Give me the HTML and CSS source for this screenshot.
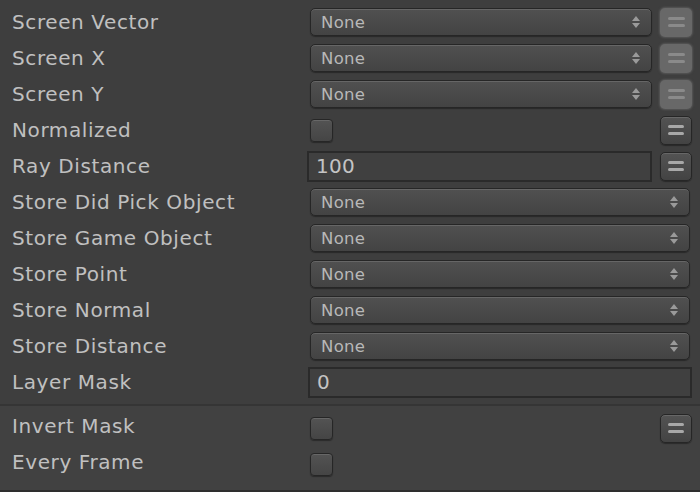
FILE: index.html
```html
<!DOCTYPE html>
<html>
<head>
<meta charset="utf-8">
<link rel="stylesheet" href="styles.css">
</head>
<body>
<div class="panel">
  <div class="section">
    <div class="row"><div class="label">Screen Vector</div><div class="ctrl"><div class="dropdown"><span>None</span><svg class="arrows" width="8" height="12" viewBox="0 0 8 12"><path d="M4 0 L8 5 L0 5 Z M0 7 L8 7 L4 12 Z" fill="#9a9a9a"/></svg></div><div class="vbtn light"><i></i><i></i></div></div></div>
    <div class="row"><div class="label">Screen X</div><div class="ctrl"><div class="dropdown"><span>None</span><svg class="arrows" width="8" height="12" viewBox="0 0 8 12"><path d="M4 0 L8 5 L0 5 Z M0 7 L8 7 L4 12 Z" fill="#9a9a9a"/></svg></div><div class="vbtn light"><i></i><i></i></div></div></div>
    <div class="row"><div class="label">Screen Y</div><div class="ctrl"><div class="dropdown"><span>None</span><svg class="arrows" width="8" height="12" viewBox="0 0 8 12"><path d="M4 0 L8 5 L0 5 Z M0 7 L8 7 L4 12 Z" fill="#9a9a9a"/></svg></div><div class="vbtn light"><i></i><i></i></div></div></div>
    <div class="row"><div class="label">Normalized</div><div class="ctrl"><div class="check"></div><div class="spacer"></div><div class="vbtn dark"><i></i><i></i></div></div></div>
    <div class="row"><div class="label">Ray Distance</div><div class="ctrl"><div class="field">100</div><div class="vbtn dark"><i></i><i></i></div></div></div>
    <div class="row"><div class="label">Store Did Pick Object</div><div class="ctrl"><div class="dropdown full"><span>None</span><svg class="arrows" width="8" height="12" viewBox="0 0 8 12"><path d="M4 0 L8 5 L0 5 Z M0 7 L8 7 L4 12 Z" fill="#9a9a9a"/></svg></div></div></div>
    <div class="row"><div class="label">Store Game Object</div><div class="ctrl"><div class="dropdown full"><span>None</span><svg class="arrows" width="8" height="12" viewBox="0 0 8 12"><path d="M4 0 L8 5 L0 5 Z M0 7 L8 7 L4 12 Z" fill="#9a9a9a"/></svg></div></div></div>
    <div class="row"><div class="label">Store Point</div><div class="ctrl"><div class="dropdown full"><span>None</span><svg class="arrows" width="8" height="12" viewBox="0 0 8 12"><path d="M4 0 L8 5 L0 5 Z M0 7 L8 7 L4 12 Z" fill="#9a9a9a"/></svg></div></div></div>
    <div class="row"><div class="label">Store Normal</div><div class="ctrl"><div class="dropdown full"><span>None</span><svg class="arrows" width="8" height="12" viewBox="0 0 8 12"><path d="M4 0 L8 5 L0 5 Z M0 7 L8 7 L4 12 Z" fill="#9a9a9a"/></svg></div></div></div>
    <div class="row"><div class="label">Store Distance</div><div class="ctrl"><div class="dropdown full"><span>None</span><svg class="arrows" width="8" height="12" viewBox="0 0 8 12"><path d="M4 0 L8 5 L0 5 Z M0 7 L8 7 L4 12 Z" fill="#9a9a9a"/></svg></div></div></div>
    <div class="row"><div class="label">Layer Mask</div><div class="ctrl"><div class="field full">0</div></div></div>
  </div>
  <div class="section lower">
    <div class="row"><div class="label">Invert Mask</div><div class="ctrl"><div class="check"></div><div class="spacer"></div><div class="vbtn dark"><i></i><i></i></div></div></div>
    <div class="row"><div class="label">Every Frame</div><div class="ctrl"><div class="check"></div></div></div>
  </div>
</div>
</body>
</html>
```
FILE: styles.css
```css
html, body {
  margin: 0;
  padding: 0;
  background: #3e3e3e;
}
.panel {
  width: 700px;
  height: 492px;
  display: flex;
  flex-direction: column;
  background: #3e3e3e;
  font-family: "DejaVu Sans", "Liberation Sans", sans-serif;
  color: #c0c0c0;
  overflow: hidden;
}
.section {
  display: flex;
  flex-direction: column;
  padding-top: 4px;
}
.lower {
  border-top: 2px solid #353535;
  margin-top: 4px;
  padding-top: 4px;
  background: #414141;
  flex: 1;
  border-bottom: 2px solid #2e2e2e;
}
.row {
  height: 36px;
  display: flex;
  align-items: center;
}
.label {
  width: 296px;
  padding-left: 12px;
  font-size: 20px;
  letter-spacing: 0.6px;
  white-space: nowrap;
  position: relative;
  top: 0;
}
.lower .label { margin-top: -4px; }
.ctrl {
  flex: 1;
  display: flex;
  align-items: center;
  padding-right: 8px;
  gap: 8px;
}
.spacer { flex: 1; }
.dropdown {
  margin-left: 2px;
  width: 342px;
  height: 28px;
  box-sizing: border-box;
  border: 1px solid #262626;
  border-radius: 5px;
  background: linear-gradient(#505050, #434343);
  box-shadow: inset 0 1px 0 rgba(255,255,255,0.13), 0 1px 1px rgba(0,0,0,0.35);
  display: flex;
  align-items: center;
  padding: 0 11px 0 10px;
  font-size: 16.5px;
  letter-spacing: 0.3px;
  color: #b8b8b8;
}
.dropdown.full { width: 380px; margin-right: 2px; }
.dropdown span { flex: 1; }
.arrows { display: block; }
.vbtn {
  width: 32px;
  height: 29px;
  box-sizing: border-box;
  border-radius: 5px;
  display: flex;
  flex-direction: column;
  align-items: center;
  justify-content: center;
  gap: 4px;
}
.vbtn i {
  display: block;
  width: 16px;
  height: 3px;
  border-radius: 1.5px;
}
.vbtn.light {
  background: #686868;
  box-shadow: 0 0 2px 1px #575757;
  filter: blur(0.6px);
}
.vbtn.light i { background: #8a8a8a; width: 17px; }
.vbtn.dark {
  border: 1px solid #262626;
  background: linear-gradient(#535353, #434343);
  box-shadow: inset 0 1px 0 rgba(255,255,255,0.12), 0 1px 1px rgba(0,0,0,0.35);
}
.vbtn.dark i { background: #a8a8a8; }
.check {
  margin-left: 2px;
  width: 23px;
  height: 23px;
  box-sizing: border-box;
  border: 1px solid #262626;
  border-radius: 4px;
  background: linear-gradient(#535353, #454545);
  box-shadow: inset 0 1px 0 rgba(255,255,255,0.12), 0 1px 1px rgba(0,0,0,0.35);
}
.field {
  width: 345px;
  height: 31px;
  box-sizing: border-box;
  border: 2px solid #2a2a2a;
  background: #404040;
  display: flex;
  align-items: center;
  padding-left: 7px;
  font-size: 20px;
  letter-spacing: 0.3px;
  color: #c4c4c4;
}
.field.full { width: 384px; }
```
